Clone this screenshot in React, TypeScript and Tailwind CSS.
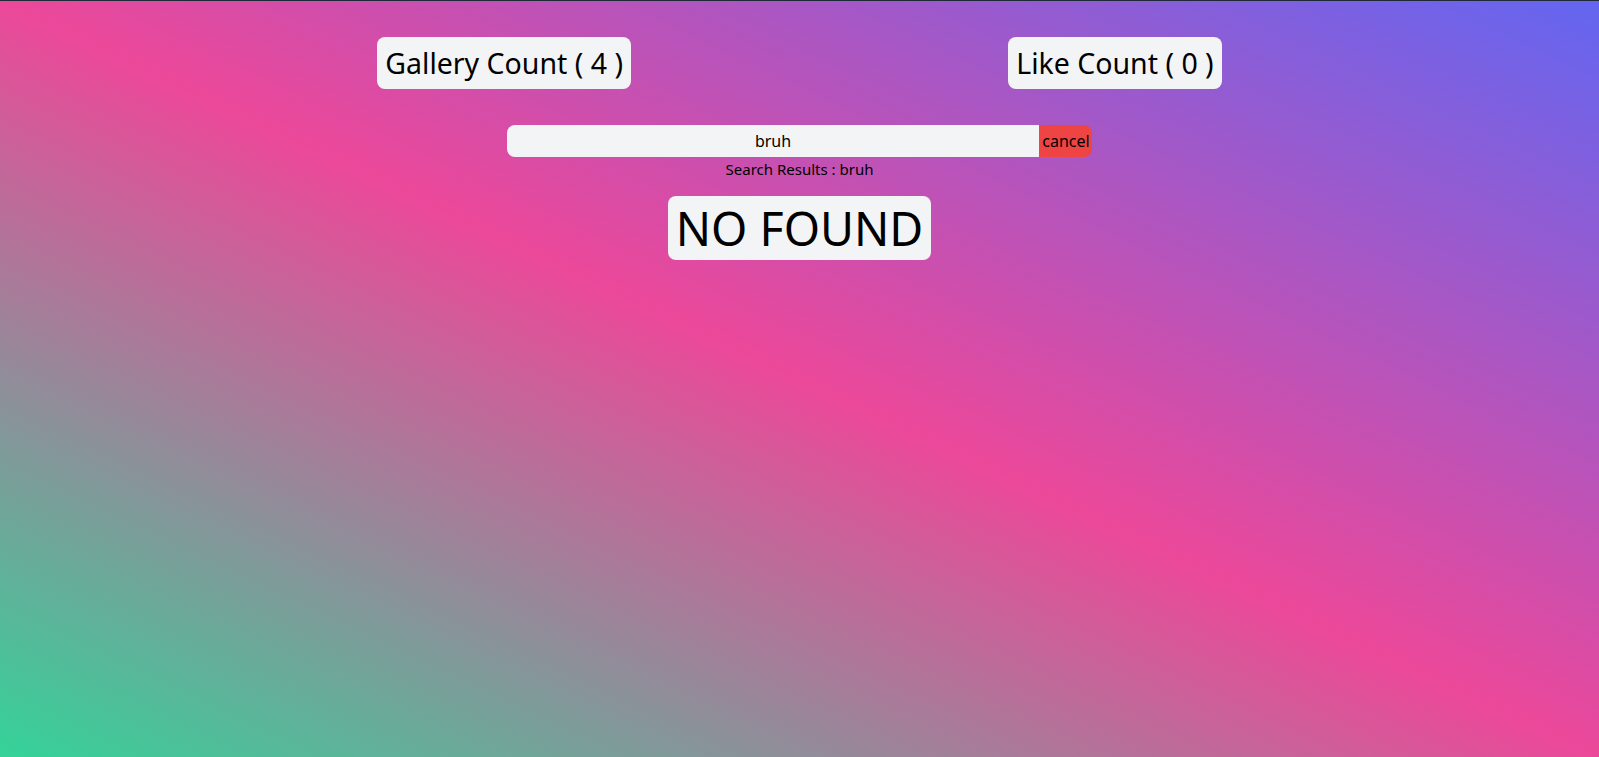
import React from "react";

export default function App() {
  return (
    <div
      className="min-h-screen w-full border-t border-[#1f2937] bg-[linear-gradient(to_top_right,#34d399,#ec4899,#6366f1)] text-black"
      style={{ fontFamily: '"Noto Sans", "Open Sans", sans-serif' }}
    >
      <div className="flex justify-evenly pt-9">
        <div className="rounded-lg bg-gray-100 px-2 py-2 text-[28.5px] leading-9">Gallery Count ( 4 )</div>
        <div className="rounded-lg bg-gray-100 px-2 py-2 text-[28.5px] leading-9">Like Count ( 0 )</div>
      </div>
      <div className="mt-9 flex justify-center">
        <input
          readOnly
          value="bruh"
          className="h-[32px] w-1/3 rounded-l-lg bg-gray-100 text-center text-base outline-none"
        />
        <button className="h-[32px] w-[53px] rounded-r-lg bg-[#ef4444] text-base">cancel</button>
      </div>
      <div className="text-center text-[15px] leading-6">Search Results : bruh</div>
      <div className="mt-[15px] flex justify-center">
        <div className="rounded-lg bg-gray-100 p-2 text-[46.5px] leading-[48px]">NO FOUND</div>
      </div>
    </div>
  );
}
